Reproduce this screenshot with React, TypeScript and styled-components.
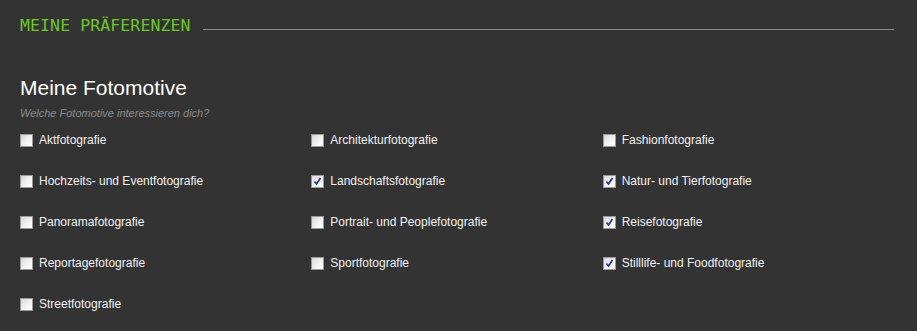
import styled, { createGlobalStyle } from 'styled-components';

const GlobalStyle = createGlobalStyle`
  html, body {
    margin: 0;
    padding: 0;
    background: #333333;
  }
  body {
    font-family: 'Liberation Sans', Arial, sans-serif;
  }
`;

const Page = styled.div`
  padding: 14px 23px 0 20px;
  height: 331px;
  box-sizing: border-box;
  background: #333333;
`;

const SectionHeader = styled.div`
  display: flex;
  align-items: center;
  gap: 12px;
  height: 22px;
`;

const SectionTitle = styled.h2`
  margin: 0;
  font-family: 'DejaVu Sans Mono', monospace;
  font-weight: normal;
  font-size: 16.5px;
  letter-spacing: 0.1px;
  color: #6cc72a;
  white-space: nowrap;
`;

const Rule = styled.div`
  flex: 1;
  height: 1px;
  margin-top: 8px;
  background: #8a8a8a;
`;

const Heading = styled.h3`
  margin: 40px 0 0;
  font-size: 21px;
  font-weight: normal;
  line-height: 23px;
  color: #ffffff;
`;

const Hint = styled.p`
  margin: 8px 0 0;
  font-size: 11px;
  font-style: italic;
  color: #8c8c8c;
  line-height: 13px;
`;

const Options = styled.div`
  display: grid;
  grid-template-columns: repeat(3, 1fr);
  grid-auto-rows: 41px;
  margin-top: 10px;
`;

const Option = styled.label`
  display: flex;
  align-items: center;
  gap: 6px;
  height: 20px;
  font-size: 12px;
  color: #f2f2f2;
`;

const Box = styled.span<{ $checked: boolean }>`
  position: relative;
  width: 13px;
  height: 13px;
  box-sizing: border-box;
  border: 1px solid #9a9a9a;
  background: linear-gradient(135deg, #d8d8d8 0%, #f4f4f4 60%, #ffffff 100%);
  flex: none;
`;

const Check = () => (
  <svg width="11" height="11" viewBox="0 0 11 11" style={{ position: 'absolute', left: 0, top: 0 }}>
    <path d="M2.5 5.5 L4.5 8 L8.5 2" fill="none" stroke="#2a3a8c" strokeWidth="1.7" />
  </svg>
);

const items: [string, boolean][] = [
  ['Aktfotografie', false],
  ['Architekturfotografie', false],
  ['Fashionfotografie', false],
  ['Hochzeits- und Eventfotografie', false],
  ['Landschaftsfotografie', true],
  ['Natur- und Tierfotografie', true],
  ['Panoramafotografie', false],
  ['Portrait- und Peoplefotografie', false],
  ['Reisefotografie', true],
  ['Reportagefotografie', false],
  ['Sportfotografie', false],
  ['Stilllife- und Foodfotografie', true],
  ['Streetfotografie', false],
];

export default function App() {
  return (
    <Page>
      <GlobalStyle />
      <SectionHeader>
        <SectionTitle>MEINE PRÄFERENZEN</SectionTitle>
        <Rule />
      </SectionHeader>
      <Heading>Meine Fotomotive</Heading>
      <Hint>Welche Fotomotive interessieren dich?</Hint>
      <Options>
        {items.map(([name, checked]) => (
          <Option key={name}>
            <Box $checked={checked}>{checked && <Check />}</Box>
            {name}
          </Option>
        ))}
      </Options>
    </Page>
  );
}
